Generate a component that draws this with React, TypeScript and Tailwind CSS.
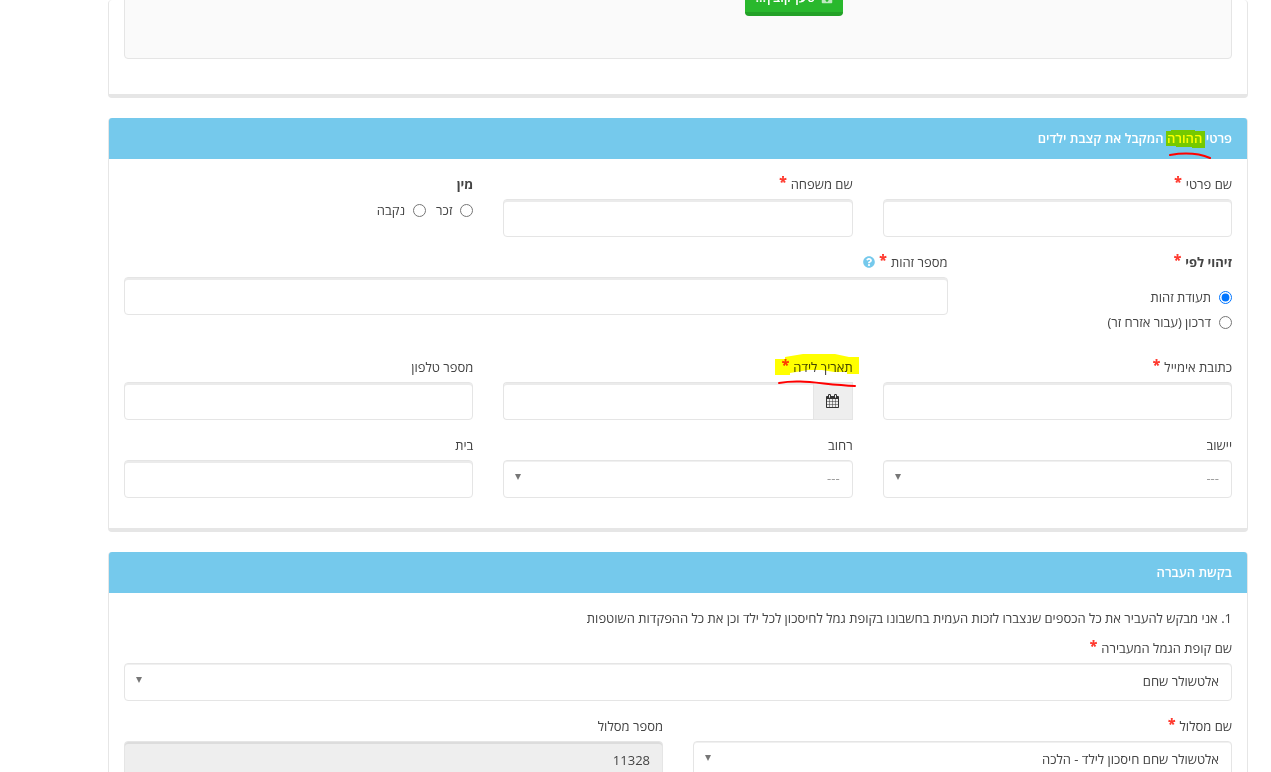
import { useState } from "react";
import type { ReactNode } from "react";
import { FaQuestionCircle, FaSave } from "react-icons/fa";

const controlClass =
  "block h-[38px] w-full rounded border border-[#e5e5e5] px-3 text-[13px] text-[#444] outline-none focus:border-[#75c9ec]";
const inputClass = `${controlClass} bg-white shadow-[inset_0_2px_0_#ebebeb]`;

function Required() {
  return <span className="h-5 text-sm leading-4 font-extrabold text-[#ff3b30]">*</span>;
}

function CalendarIcon() {
  return (
    <svg viewBox="0 0 1664 1792" fill="currentColor" className="h-[14px] w-[13px]" aria-hidden="true">
      <path d="M128 1664h288v-288h-288v288zm352 0h320v-288h-320v288zm-352-352h288v-320h-288v320zm352 0h320v-320h-320v320zm-352-384h288v-288h-288v288zm736 736h320v-288h-320v288zm-384-736h320v-288h-320v288zm768 736h288v-288h-288v288zm-384-352h320v-320h-320v320zm-352-864v-288q0-13-9.5-22.5t-22.5-9.5h-64q-13 0-22.5 9.5t-9.5 22.5v288q0 13 9.5 22.5t22.5 9.5h64q13 0 22.5-9.5t9.5-22.5zm736 864h288v-320h-288v320zm-384-384h320v-288h-320v288zm384 0h288v-288h-288v288zm32-480v-288q0-13-9.5-22.5t-22.5-9.5h-64q-13 0-22.5 9.5t-9.5 22.5v288q0 13 9.5 22.5t22.5 9.5h64q13 0 22.5-9.5t9.5-22.5zm384-64v1280q0 52-38 90t-90 38h-1408q-52 0-90-38t-38-90v-1280q0-52 38-90t90-38h128v-96q0-66 47-113t113-47h64q66 0 113 47t47 113v96h384v-96q0-66 47-113t113-47h64q66 0 113 47t47 113v96h128q52 0 90 38t38 90z" />
    </svg>
  );
}

interface FieldProps {
  id: string;
  label: string;
  required?: boolean;
  hint?: ReactNode;
  mark?: ReactNode;
  className?: string;
  children: ReactNode;
}

function Field({ id, label, required, hint, mark, className = "", children }: FieldProps) {
  return (
    <div className={className}>
      <div className="flex h-[25px] items-start gap-1">
        <label htmlFor={id} className="relative flex h-5 items-center gap-1 leading-5">
          {label}
          {required && <Required />}
          {mark}
        </label>
        {hint}
      </div>
      {children}
    </div>
  );
}

function SelectBox({ id, value, muted }: { id: string; value: string; muted?: boolean }) {
  return (
    <div className="relative">
      <select
        id={id}
        defaultValue={value}
        className={`${controlClass} appearance-none bg-white shadow-[inset_0_1px_0_#f0f0f0] ${muted ? "text-[#999]" : ""}`}
      >
        <option value={value}>{value}</option>
      </select>
      <svg viewBox="0 0 6 6" className="pointer-events-none absolute top-[14px] left-3 size-[6px] fill-[#777]" aria-hidden="true">
        <path d="M0 0h6L3 6z" />
      </svg>
    </div>
  );
}

interface RadioProps {
  name: string;
  label: string;
  checked: boolean;
  onSelect: () => void;
}

function Radio({ name, label, checked, onSelect }: RadioProps) {
  return (
    <label className="flex items-center gap-2 leading-5">
      <input type="radio" name={name} checked={checked} onChange={onSelect} className="size-[13px]" />
      {label}
    </label>
  );
}

function Panel({ title, children }: { title?: ReactNode; children: ReactNode }) {
  return (
    <section className="mb-5 rounded border border-t-0 border-b-4 border-[#e6e6e6] bg-white">
      {title && (
        <h2 className="flex h-[41px] items-center rounded-t-[3px] bg-[#75c9ec] px-[15px] text-[13px] font-semibold text-white">
          {title}
        </h2>
      )}
      <div className="p-[15px]">{children}</div>
    </section>
  );
}

// The yellow is blended so that the text underneath stays readable, the pen line is opaque
function HeadingMark() {
  return (
    <>
      <svg viewBox="0 0 48 34" className="pointer-events-none absolute -top-1 -right-[10px] h-[34px] w-12 mix-blend-multiply" aria-hidden="true">
        <path d="M2 6h5V5h24v1h10v17H28v-1H12v-1H2z" fill="#ff0" />
      </svg>
      <svg viewBox="0 0 48 34" className="pointer-events-none absolute -top-1 -right-[10px] h-[34px] w-12" aria-hidden="true">
        <path d="M6 30c12-2 28-2 40 3" fill="none" stroke="#f00" strokeWidth="2" strokeLinecap="round" />
      </svg>
    </>
  );
}

function BirthDateMark() {
  return (
    <>
      <svg viewBox="0 0 86 36" className="pointer-events-none absolute -top-1 -right-[7px] h-9 w-[86px] mix-blend-multiply" aria-hidden="true">
        <path d="M1 6h10V4l18-3h32l14 3h10v17H73v-2H60l-12-2H34l-18 3v2H1z" fill="#ff0" />
      </svg>
      <svg viewBox="0 0 86 36" className="pointer-events-none absolute -top-1 -right-[7px] h-9 w-[86px]" aria-hidden="true">
        <path d="M5 30c22-4 40 1 76 3" fill="none" stroke="#f00" strokeWidth="2" strokeLinecap="round" />
      </svg>
    </>
  );
}

export default function App() {
  const [gender, setGender] = useState("");
  const [idType, setIdType] = useState("id");

  return (
    <main
      dir="rtl"
      className="h-screen overflow-hidden bg-white pr-[23px] pl-[108px] font-['Open_Sans','Noto_Sans',sans-serif] text-[13px] text-[#444]"
    >
      <Panel>
        <div className="-mt-[41px] mb-5 rounded border border-[#e5e5e5] bg-[#fafafa] ps-[35%] pb-[42px]">
          <button
            type="button"
            className="flex h-[41px] w-[98px] items-center justify-center gap-[6px] rounded border-b-4 border-[#23a127] bg-[#29b82d] pt-2 text-[13px] font-semibold text-white"
          >
            <FaSave className="size-3 opacity-70" aria-hidden="true" />
            טען קובץ...
          </button>
        </div>
      </Panel>

      <Panel
        title={
          <span>
            פרטי{" "}
            <span className="relative">
              ההורה
              <HeadingMark />
            </span>{" "}
            המקבל את קצבת ילדים
          </span>
        }
      >
        <div className="mb-[15px] grid grid-cols-3 gap-x-[30px]">
          <Field id="first-name" label="שם פרטי" required>
            <input id="first-name" type="text" className={inputClass} />
          </Field>
          <Field id="last-name" label="שם משפחה" required>
            <input id="last-name" type="text" className={inputClass} />
          </Field>
          <fieldset>
            <legend className="h-[26px] leading-5 font-bold">מין</legend>
            <div className="flex gap-[10px]">
              <Radio name="gender" label="זכר" checked={gender === "male"} onSelect={() => setGender("male")} />
              <Radio name="gender" label="נקבה" checked={gender === "female"} onSelect={() => setGender("female")} />
            </div>
          </fieldset>
        </div>

        <div className="mb-[15px] grid grid-cols-4 gap-x-[30px]">
          <fieldset>
            <legend className="flex h-[35px] items-start font-bold">
              <span className="flex h-5 items-center gap-1 leading-5">
                זיהוי לפי
                <Required />
              </span>
            </legend>
            <div className="flex flex-col gap-[5px] pb-[10px]">
              <Radio name="id-type" label="תעודת זהות" checked={idType === "id"} onSelect={() => setIdType("id")} />
              <Radio
                name="id-type"
                label="דרכון (עבור אזרח זר)"
                checked={idType === "passport"}
                onSelect={() => setIdType("passport")}
              />
            </div>
          </fieldset>
          <Field
            id="id-number"
            label="מספר זהות"
            required
            className="col-span-3"
            hint={<FaQuestionCircle className="mt-1 size-3 text-[#75c9ec]" aria-hidden="true" />}
          >
            <input id="id-number" type="text" className={inputClass} />
          </Field>
        </div>

        <div className="mb-[15px] grid grid-cols-3 gap-x-[30px] gap-y-[15px]">
          <Field id="email" label="כתובת אימייל" required>
            <input id="email" type="email" className={inputClass} />
          </Field>
          <Field id="birth-date" label="תאריך לידה" required mark={<BirthDateMark />}>
            <div className="flex">
              <button
                type="button"
                aria-label="בחירת תאריך"
                className="flex h-[38px] w-10 shrink-0 items-center justify-center border border-[#e5e5e5] bg-[#eee] text-[#333]"
              >
                <CalendarIcon />
              </button>
              <input id="birth-date" type="text" className={`${inputClass} rounded-r-none border-r-0`} />
            </div>
          </Field>
          <Field id="phone" label="מספר טלפון">
            <input id="phone" type="tel" className={inputClass} />
          </Field>
          <Field id="city" label="יישוב">
            <SelectBox id="city" value="---" muted />
          </Field>
          <Field id="street" label="רחוב">
            <SelectBox id="street" value="---" muted />
          </Field>
          <Field id="house" label="בית">
            <input id="house" type="text" className={inputClass} />
          </Field>
        </div>
      </Panel>

      <Panel title="בקשת העברה">
        <p className="mb-[10px] leading-5">
          1. אני מבקש להעביר את כל הכספים שנצברו לזכות העמית בחשבונו בקופת גמל לחיסכון לכל ילד וכן את כל ההפקדות השוטפות
        </p>
        <Field id="fund" label="שם קופת הגמל המעבירה" required className="mb-[15px]">
          <SelectBox id="fund" value="אלטשולר שחם" />
        </Field>
        <div className="grid grid-cols-2 gap-x-[30px]">
          <Field id="track" label="שם מסלול" required>
            <SelectBox id="track" value="אלטשולר שחם חיסכון לילד - הלכה" />
          </Field>
          <Field id="track-number" label="מספר מסלול">
            <input
              id="track-number"
              type="text"
              readOnly
              defaultValue="11328"
              className={`${controlClass} bg-[#eee] shadow-[inset_0_2px_0_#dcdcdc]`}
            />
          </Field>
        </div>
      </Panel>
    </main>
  );
}
